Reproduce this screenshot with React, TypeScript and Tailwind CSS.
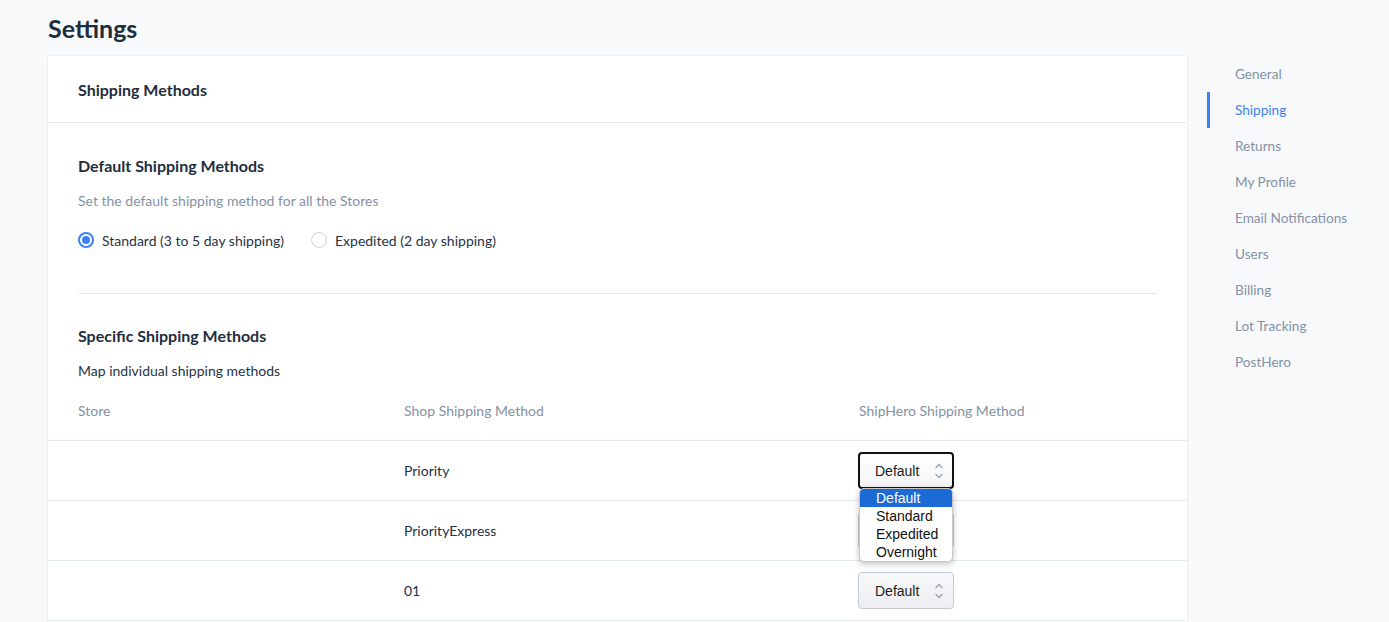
import React from "react";

const navItems = [
  "General",
  "Shipping",
  "Returns",
  "My Profile",
  "Email Notifications",
  "Users",
  "Billing",
  "Lot Tracking",
  "PostHero",
];

const rows = ["Priority", "PriorityExpress", "01"];

function Chevrons() {
  return (
    <svg width="10" height="20" viewBox="0 0 10 20" className="text-[#9aa5b1]">
      <path d="M2 6.5 L5 3.5 L8 6.5" fill="none" stroke="currentColor" strokeWidth="1.3" strokeLinecap="round" strokeLinejoin="round" />
      <path d="M2 13.5 L5 16.5 L8 13.5" fill="none" stroke="currentColor" strokeWidth="1.3" strokeLinecap="round" strokeLinejoin="round" />
    </svg>
  );
}

function SelectBox({ focused, hidden }: { focused?: boolean; hidden?: boolean }) {
  return (
    <div
      className={
        focused
          ? "w-[96px] h-[37px] rounded-[4px] border-2 border-[#111] bg-gradient-to-b from-white to-[#f3f4f6] flex items-center justify-between pl-[15px] pr-[8px] pt-[1px]"
          : "w-[96px] h-[37px] rounded-[4px] border border-[#c3cad3] bg-gradient-to-b from-[#f7f8fa] to-[#eceef1] flex items-center justify-between pl-[16px] pr-[9px] pt-[1px]"
      }
      style={{ fontFamily: '"Liberation Sans", Arial, sans-serif' }}
    >
      <span className={hidden ? "invisible text-[14px]" : "text-[14px] text-[#1b1b1b]"}>Default</span>
      <span className={hidden ? "invisible" : ""}>
        <Chevrons />
      </span>
    </div>
  );
}

export default function App() {
  return (
    <div
      className="min-h-screen bg-[#f8f9fb] flex pl-[48px] text-[#273444]"
      style={{ fontFamily: 'Lato, "Open Sans", sans-serif' }}
    >
      <div className="w-[1139px] shrink-0">
        <div className="h-[56px] flex items-center">
          <h1 className="text-[25px] font-bold text-[#1f2d3d] leading-none">Settings</h1>
        </div>
        <div className="bg-white shadow-[0_0_2px_rgba(30,40,60,0.12)]">
          <div className="h-[67px] px-[30px] flex items-center border-b border-[#e5e9f2] pt-[2px]">
            <h2 className="text-[16px] font-bold text-[#1f2d3d]">Shipping Methods</h2>
          </div>
          <div className="px-[30px] pt-[33px] pb-[43px]">
            <h3 className="text-[16px] leading-[20px] font-bold text-[#1f2d3d]">Default Shipping Methods</h3>
            <p className="mt-[15px] text-[14px] leading-[20px] text-[#8492a6]">
              Set the default shipping method for all the Stores
            </p>
            <div className="mt-[19px] flex items-center h-[20px] text-[14px] text-[#273444]">
              <div className="flex items-center">
                <span className="w-4 h-4 rounded-full border-2 border-[#3b82f6] flex items-center justify-center">
                  <span className="w-[8px] h-[8px] rounded-full bg-[#3b82f6]" />
                </span>
                <span className="ml-[8px]">Standard (3 to 5 day shipping)</span>
              </div>
              <div className="flex items-center ml-[27px]">
                <span className="w-4 h-4 rounded-full border border-[#cfd6e0] bg-white" />
                <span className="ml-[8px]">Expedited (2 day shipping)</span>
              </div>
            </div>
          </div>
          <div className="mx-[30px] border-t border-[#e5e9f2]" />
          <div className="px-[30px] pt-[32px]">
            <h3 className="text-[16px] leading-[20px] font-bold text-[#1f2d3d]">Specific Shipping Methods</h3>
            <p className="mt-[15px] text-[14px] leading-[20px] text-[#273444]">Map individual shipping methods</p>
          </div>
          <div className="grid grid-cols-[326px_455px_1fr] pl-[30px] pt-[20px] pb-[19px] text-[14px] leading-[20px] text-[#8492a6]">
            <div>Store</div>
            <div>Shop Shipping Method</div>
            <div>ShipHero Shipping Method</div>
          </div>
          {rows.map((r, i) => (
            <div
              key={r}
              className="relative grid grid-cols-[326px_455px_1fr] pl-[30px] h-[60px] items-center border-t border-[#e5e9f2] text-[14px] text-[#243146]"
            >
              <div />
              <div>{r}</div>
              <div className="-ml-[1px]">
                <SelectBox focused={i === 0} hidden={i === 1} />
              </div>
              {i === 0 && (
                <div
                  className="absolute left-[811px] top-[47px] z-10 w-[94px] bg-white rounded-[5px] border border-[#c8c8c8] shadow-[0_2px_6px_rgba(0,0,0,0.25)] overflow-hidden text-[14px] leading-[18px] text-[#111]"
                  style={{ fontFamily: '"Liberation Sans", Arial, sans-serif' }}
                >
                  <div className="bg-[#1b6ad6] text-white pl-[16px]">Default</div>
                  <div className="pl-[16px]">Standard</div>
                  <div className="pl-[16px]">Expedited</div>
                  <div className="pl-[16px]">Overnight</div>
                </div>
              )}
            </div>
          ))}
          <div className="border-t border-[#e5e9f2] h-[20px]" />
        </div>
      </div>
      <nav className="ml-[20px] mt-[56px] flex flex-col">
        {navItems.map((n) => (
          <div
            key={n}
            className={
              n === "Shipping"
                ? "h-9 flex items-center pl-[25px] border-l-[3px] border-[#3b82f6] text-[13.6px] text-[#3b82f6]"
                : "h-9 flex items-center pl-[28px] text-[13.6px] text-[#8492a6]"
            }
          >
            {n}
          </div>
        ))}
      </nav>
    </div>
  );
}
